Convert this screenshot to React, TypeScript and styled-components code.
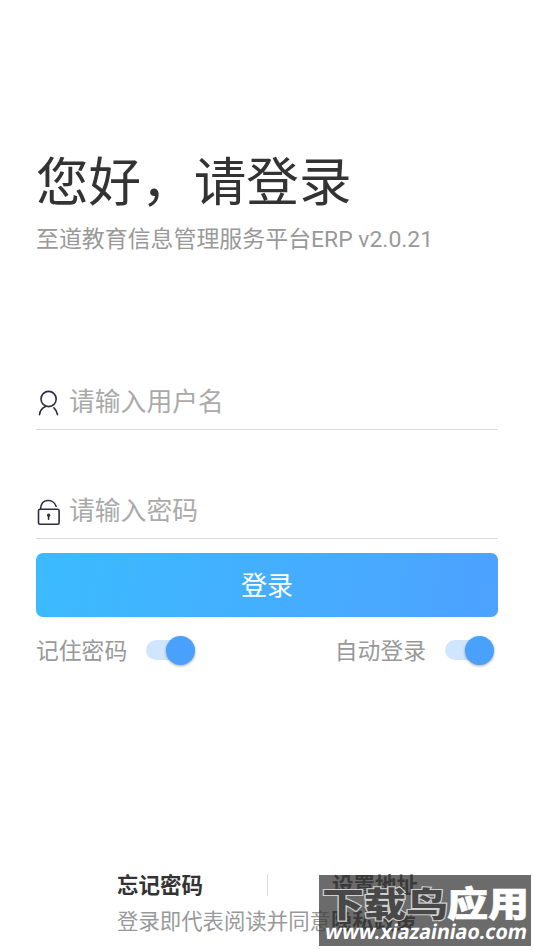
import React, { useState } from 'react';
import styled, { createGlobalStyle } from 'styled-components';

const GlobalStyle = createGlobalStyle`
  * { box-sizing: border-box; }
  body { margin: 0; background: #fff; font-family: Roboto, "Noto Sans CJK SC", sans-serif; }
`;

const Screen = styled.main`
  position: relative;
  display: flex;
  flex-direction: column;
  width: 534px;
  height: 950px;
  padding: 148px 36px 0;
  overflow: hidden;
  background: #fff;
`;

const Title = styled.h1`
  margin: 0;
  font-size: 52.6px;
  line-height: 70px;
  font-weight: 400;
  color: #333;
  white-space: nowrap;
`;

const Subtitle = styled.p`
  margin: 7px 0 0;
  font-size: 22.93px;
  line-height: 30px;
  color: #999;
  white-space: nowrap;
`;

const Form = styled.form`
  display: flex;
  flex-direction: column;
  margin-top: 120px;
`;

const Field = styled.label<{ $gap: number }>`
  display: flex;
  align-items: center;
  gap: 7px;
  width: 462px;
  height: 55px;
  margin-bottom: ${(p) => p.$gap}px;
  border-bottom: 1px solid #dcdcdc;
`;

const FieldIcon = styled.svg`
  flex: none;
  width: 26px;
  height: 30px;
  fill: none;
  stroke: #2c2c40;
  stroke-width: 1.6;
  stroke-linecap: round;
`;

const Input = styled.input`
  flex: 1;
  min-width: 0;
  height: 40px;
  padding: 0;
  border: 0;
  outline: 0;
  background: none;
  font-family: inherit;
  font-size: 25.8px;
  color: #333;
  &::placeholder { color: #aaa; opacity: 1; }
`;

const Submit = styled.button`
  width: 462px;
  height: 64px;
  padding: 2px 0 0;
  border: 0;
  border-radius: 7px;
  background: linear-gradient(100deg, #3bbbff, #4da2ff);
  font-family: inherit;
  font-size: 26px;
  line-height: 62px;
  color: #fff;
`;

const Options = styled.div`
  display: flex;
  justify-content: space-between;
  width: 458px;
  margin-top: 15px;
`;

const Option = styled.div`
  display: flex;
  align-items: center;
  gap: 19px;
  height: 36px;
  font-size: 22.8px;
  line-height: 36px;
  color: #999;
`;

const OptionLabel = styled.span`
  padding-top: 4px;
`;

const Track = styled.button<{ $on: boolean }>`
  display: flex;
  align-items: center;
  justify-content: ${(p) => (p.$on ? 'flex-end' : 'flex-start')};
  width: 49px;
  height: 20px;
  padding: 0;
  border: 0;
  border-radius: 10px;
  background: ${(p) => (p.$on ? '#d0e6ff' : '#ddd')};
`;

const Thumb = styled.span`
  flex: none;
  width: 29px;
  height: 29px;
  border-radius: 50%;
  background: #4aa1fb;
  box-shadow: 0 1px 3px rgba(0, 0, 0, 0.35);
`;

const Footer = styled.footer`
  display: flex;
  flex-direction: column;
  width: 301px;
  margin: 198px 0 0 81px;
  white-space: nowrap;
`;

const Links = styled.div`
  display: flex;
  align-items: center;
  justify-content: space-between;
  height: 34px;
  font-size: 21.5px;
  font-weight: 700;
  color: #333;
`;

const Divider = styled.span`
  width: 1px;
  height: 22px;
  margin-top: 3px;
  background: #ddd;
`;

const Terms = styled.p`
  margin: 5px 0 0;
  font-size: 21.4px;
  line-height: 34px;
  color: #999;
`;

const Policy = styled.span`
  color: #333;
  font-weight: 700;
`;

const Watermark = styled.aside`
  position: absolute;
  left: 319px;
  top: 875px;
  width: 212px;
  height: 71px;
  background: rgba(60, 60, 60, 0.76);
`;

const Mark = styled.svg`
  display: block;
  width: 212px;
  height: 71px;
  font-family: "Noto Sans CJK SC", sans-serif;
  font-weight: 900;
`;

function Toggle({ label }: { label: string }) {
  const [on, setOn] = useState(true);
  return (
    <Option>
      <OptionLabel>{label}</OptionLabel>
      <Track type="button" role="switch" aria-checked={on} aria-label={label} $on={on} onClick={() => setOn(!on)}>
        <Thumb />
      </Track>
    </Option>
  );
}

export default function App() {
  return (
    <>
      <GlobalStyle />
      <Screen>
        <Title>您好，请登录</Title>
        <Subtitle>至道教育信息管理服务平台ERP v2.0.21</Subtitle>
        <Form onSubmit={(e) => e.preventDefault()}>
          <Field $gap={54}>
            <FieldIcon viewBox="0 0 26 30">
              <circle cx="12.6" cy="12" r="7.6" />
              <path d="M9.6 19.4C6 20.9 3.9 24 3.5 27.6M17.9 20.8C20 22.6 21.1 25 21.5 27.6" />
            </FieldIcon>
            <Input placeholder="请输入用户名" />
          </Field>
          <Field $gap={14}>
            <FieldIcon viewBox="0 0 26 30">
              <rect x="2.5" y="13.2" width="20.6" height="15" rx="1.5" />
              <path d="M4.6 12.9C5.1 1.8 17.7 2.6 20.1 10.3M12.6 20v3.2" />
              <circle cx="12.6" cy="19.2" r="1.6" fill="#2c2c40" stroke="none" />
            </FieldIcon>
            <Input type="password" placeholder="请输入密码" />
          </Field>
          <Submit>登录</Submit>
          <Options>
            <Toggle label="记住密码" />
            <Toggle label="自动登录" />
          </Options>
        </Form>
        <Footer>
          <Links>
            <span>忘记密码</span>
            <Divider />
            <span>设置地址</span>
          </Links>
          <Terms>登录即代表阅读并同意<Policy>隐私政策</Policy></Terms>
        </Footer>
        <Watermark>
          <Mark viewBox="0 0 212 71">
            <text x="3" y="41.5" fontSize="34" textLength="126" lengthAdjust="spacingAndGlyphs" fill="#484848" stroke="#d0d0d0" strokeWidth="2.2" paintOrder="stroke">下载鸟</text>
            <text x="128" y="41.5" fontSize="35" textLength="82" lengthAdjust="spacingAndGlyphs" fill="#fff" stroke="#fff" strokeWidth="0.6">应用</text>
            <text transform="translate(5 63.5) skewX(-10)" fontSize="20.5" fontFamily="Noto Sans, sans-serif" fontWeight="700" textLength="202" lengthAdjust="spacingAndGlyphs" fill="#fff">www.xiazainiao.com</text>
          </Mark>
        </Watermark>
      </Screen>
    </>
  );
}
